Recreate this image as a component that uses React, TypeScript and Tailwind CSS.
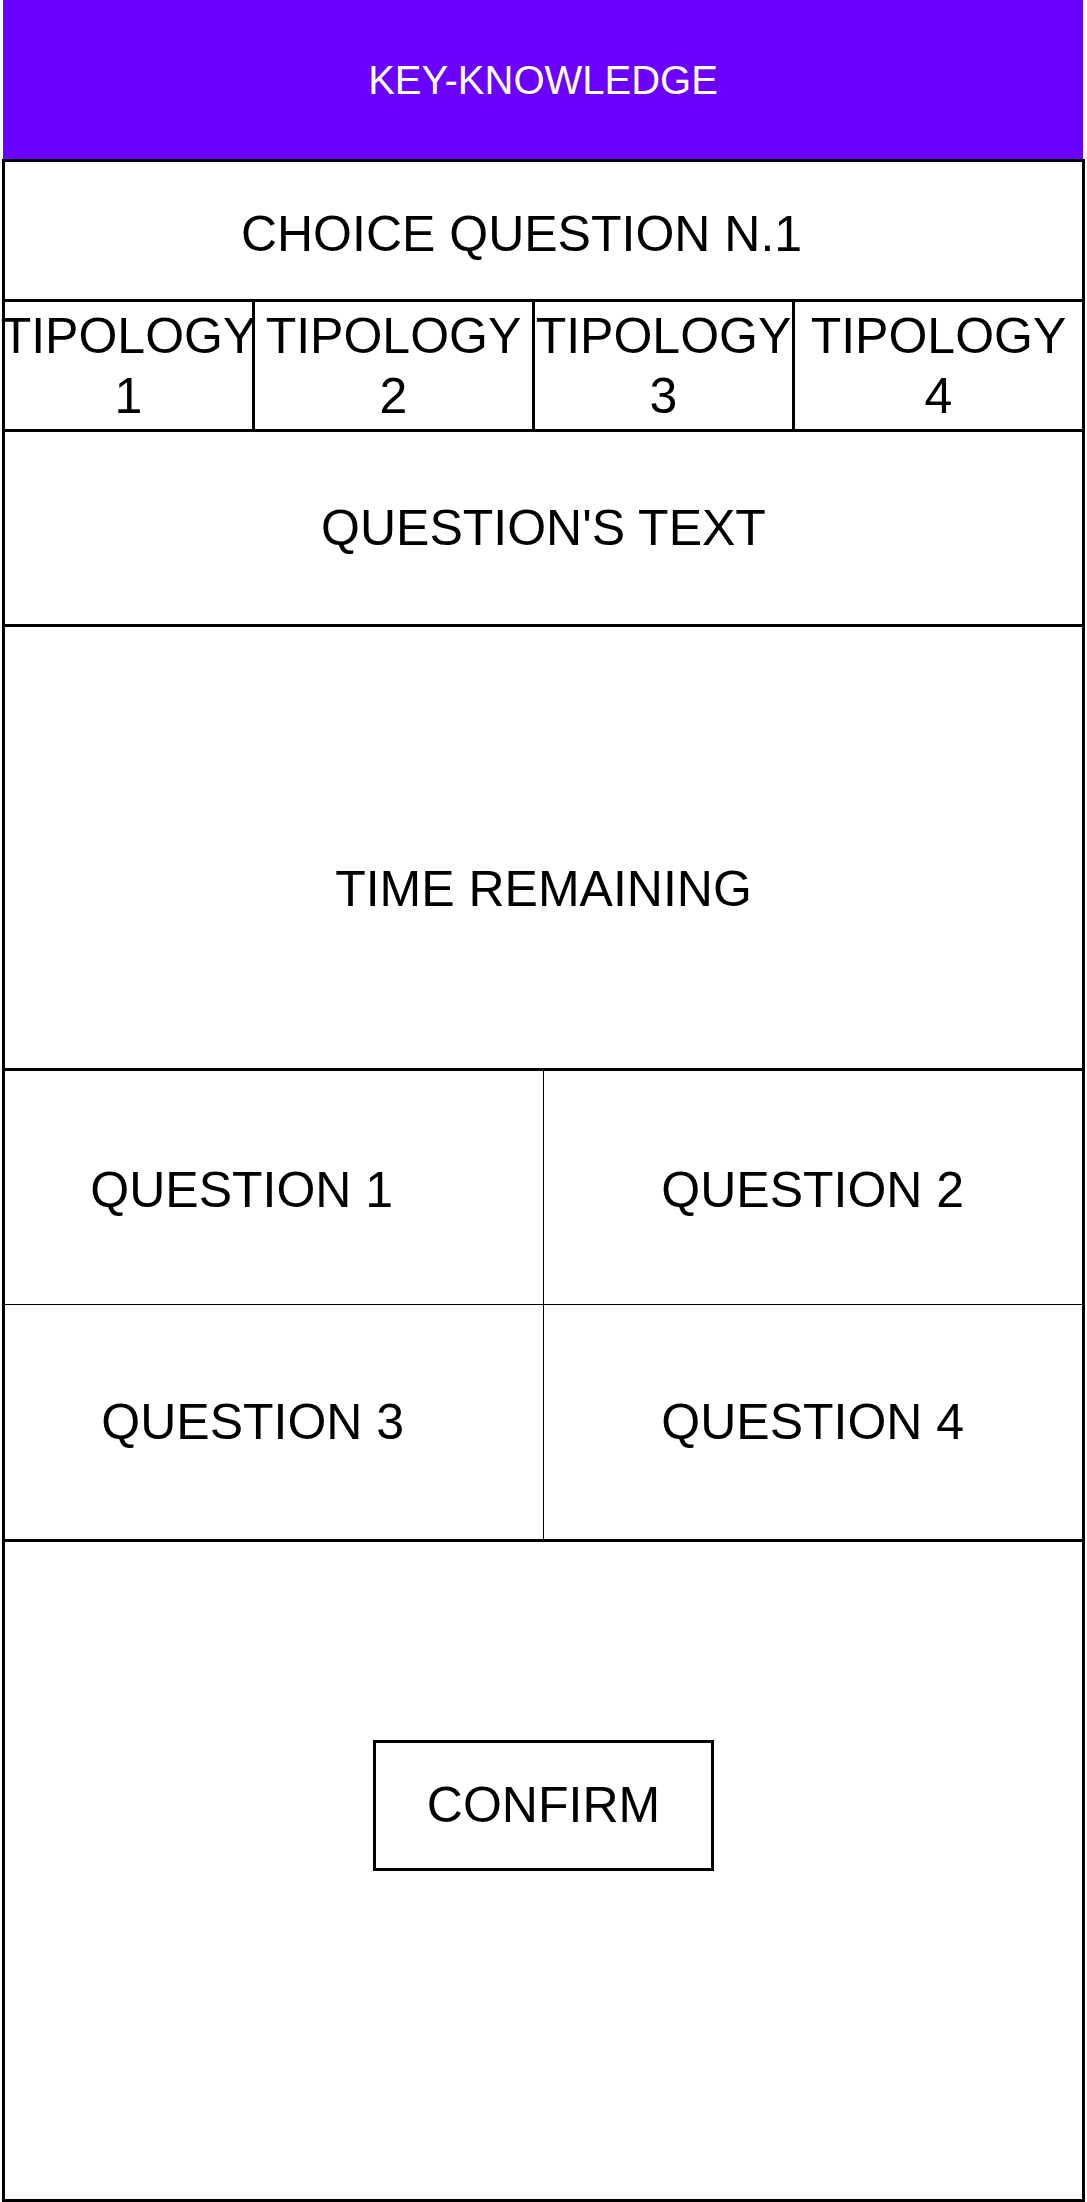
import React from "react";

const font = { fontFamily: '"Liberation Sans", Arial, sans-serif' };

function Tipology({ n, last }: { n: number; last?: boolean }) {
  return (
    <div
      className={
        "flex items-center justify-center text-center text-[50px] leading-[60px] whitespace-nowrap " +
        (last ? "" : "border-r-[3px] border-black")
      }
    >
      <span>
        TIPOLOGY
        <br />
        {n}
      </span>
    </div>
  );
}

export default function App() {
  return (
    <div className="min-h-[2202px] bg-white text-black" style={font}>
      <div className="ml-[3px] flex h-[159px] w-[1080px] items-center justify-center bg-[#6a00ff] text-[40px] text-white">
        KEY-KNOWLEDGE
      </div>

      <div className="ml-[2px] flex w-[1083px] flex-col border-x-[3px] border-y-[3px] border-black">
        <div className="flex h-[140px] items-center justify-center border-b-[3px] border-black pt-2 pr-[44px] text-[50px]">
          CHOICE QUESTION N.1
        </div>

        <div className="grid h-[130px] grid-cols-[250px_280px_260px_1fr] border-b-[3px] border-black">
          <Tipology n={1} />
          <Tipology n={2} />
          <Tipology n={3} />
          <Tipology n={4} last />
        </div>

        <div className="flex h-[195px] items-center justify-center border-b-[3px] border-black text-[50px]">
          QUESTION'S TEXT
        </div>

        <div className="flex h-[444px] items-center justify-center border-b-[3px] border-black pt-[84px] text-[50px]">
          TIME REMAINING
        </div>

        <div className="grid h-[471px] grid-cols-2 grid-rows-[234px_1fr] border-b-[3px] border-black text-[50px]">
          <div className="flex items-center justify-center border-r border-b border-black pt-[5px] pr-16">
            QUESTION 1
          </div>
          <div className="flex items-center justify-center border-b border-black pt-[5px]">
            QUESTION 2
          </div>
          <div className="flex items-center justify-center border-r border-black pr-[42px]">
            QUESTION 3
          </div>
          <div className="flex items-center justify-center">QUESTION 4</div>
        </div>

        <div className="flex h-[657px] flex-col items-center pt-[198px]">
          <button className="flex h-[131px] w-[341px] items-center justify-center border-[3px] border-black bg-white text-[50px] text-black">
            CONFIRM
          </button>
        </div>
      </div>
    </div>
  );
}
